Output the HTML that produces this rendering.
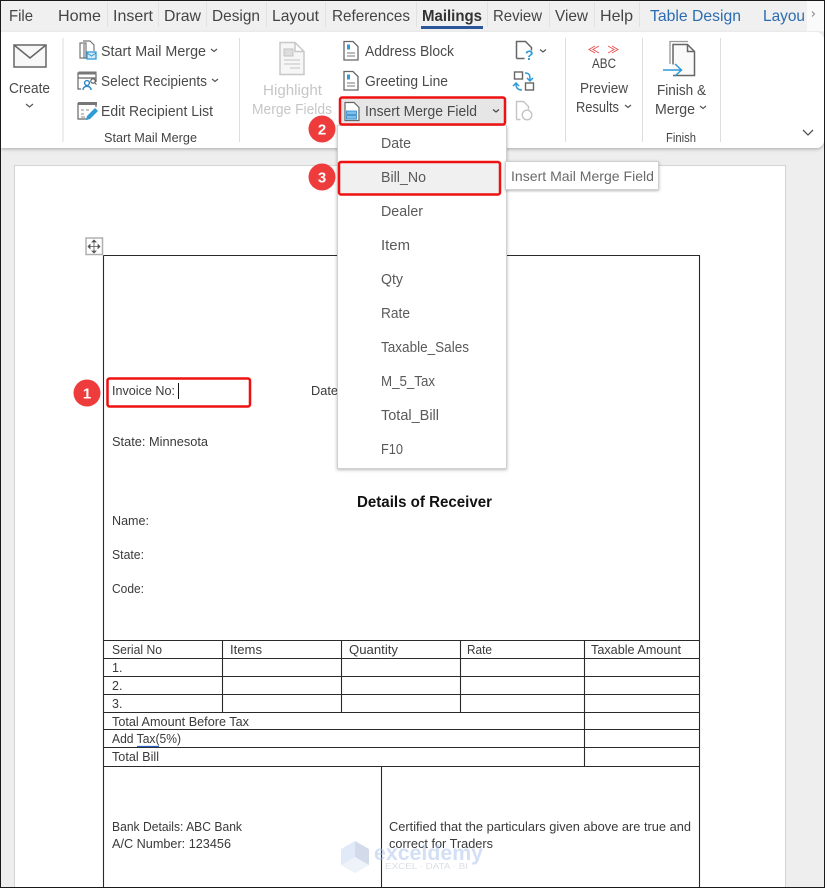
<!DOCTYPE html>
<html><head><meta charset="utf-8"><title>Mail Merge</title>
<style>
html,body{margin:0;padding:0;background:#fff;width:825px;height:888px;overflow:hidden}
svg{display:block}
text{font-family:"Liberation Sans",sans-serif;fill:#444}
.tab{font-size:16px;fill:#444}
.r{font-size:14.5px;fill:#4a4a4a}
.d{font-size:12.5px;fill:#3a3a3a}
.m{font-size:14.5px;fill:#5a5a5a}
</style></head><body>
<svg width="825" height="888" viewBox="0 0 825 888" xmlns="http://www.w3.org/2000/svg">
<defs>
<filter id="s" x="-10%" y="-10%" width="120%" height="120%"><feDropShadow dx="0" dy="1" stdDeviation="1.5" flood-color="#000" flood-opacity=".28"/></filter>
<filter id="b" x="-5%" y="-20%" width="110%" height="150%"><feDropShadow dx="0" dy="1.5" stdDeviation="1.5" flood-color="#000" flood-opacity=".25"/></filter>
</defs>
<rect width="825" height="888" fill="#eeeeee"/>
<rect x="0" y="0" width="825" height="32" fill="#f0f0f0"/>

<!-- page -->
<rect x="14.5" y="165.5" width="771" height="730" fill="#fff" stroke="#d4d4d4"/>

<!-- ribbon -->
<path d="M1 32H817a8 8 0 0 1 7 7V141a8 8 0 0 1-7 7H1Z" fill="#fff" filter="url(#b)"/>

<!-- tabs -->
<g stroke="#e2e2e2"><path d="M107.500 2V27M158.500 2V27M206.500 2V27M266.500 2V27M325.500 2V27M416.500 2V27M487.500 2V27M549.500 2V27M594.500 2V27M639.500 2V27"/></g>
<text class="tab" x="9" y="21" textLength="24" lengthAdjust="spacingAndGlyphs">File</text>
<text class="tab" x="58" y="21" textLength="43" lengthAdjust="spacingAndGlyphs">Home</text>
<text class="tab" x="113" y="21" textLength="40" lengthAdjust="spacingAndGlyphs">Insert</text>
<text class="tab" x="164" y="21" textLength="37" lengthAdjust="spacingAndGlyphs">Draw</text>
<text class="tab" x="212" y="21" textLength="48" lengthAdjust="spacingAndGlyphs">Design</text>
<text class="tab" x="272" y="21" textLength="47" lengthAdjust="spacingAndGlyphs">Layout</text>
<text class="tab" x="332" y="21" textLength="78" lengthAdjust="spacingAndGlyphs">References</text>
<text class="tab" x="422" y="21" textLength="60" lengthAdjust="spacingAndGlyphs" style="font-weight:bold;fill:#333">Mailings</text>
<rect x="421" y="26" width="62" height="3" fill="#2b579a"/>
<text class="tab" x="493" y="21" textLength="49" lengthAdjust="spacingAndGlyphs">Review</text>
<text class="tab" x="555" y="21" textLength="33" lengthAdjust="spacingAndGlyphs">View</text>
<text class="tab" x="600" y="21" textLength="33" lengthAdjust="spacingAndGlyphs">Help</text>
<text class="tab" x="650" y="21" textLength="91" lengthAdjust="spacingAndGlyphs" style="fill:#2b6cb0">Table Design</text>
<text class="tab" x="763" y="21" textLength="42" lengthAdjust="spacingAndGlyphs" style="fill:#2b6cb0">Layou</text>
<rect x="807" y="1" width="17" height="30" fill="#fafafa"/>
<path d="M812 11.500l2.500 2.500-2.500 2.500" fill="none" stroke="#888"/>

<!-- group separators -->
<g stroke="#dedede"><path d="M63 38V142M239.500 38V142M565.500 38V142M642.500 38V142M720.500 38V142"/></g>

<!-- Create -->
<g fill="none" stroke="#666" stroke-width="1.500"><rect x="14" y="45" width="32" height="22" fill="#f8f8f8"/><path d="M14 45L30 58L46 45"/></g>
<text class="r" x="9" y="93" textLength="41" lengthAdjust="spacingAndGlyphs">Create</text>
<path d="M26 104l3.500 3 3.500-3" fill="none" stroke="#555" stroke-width="1.200"/>

<!-- Start mail merge icons -->
<g fill="none" stroke="#777" stroke-width="1.200">
<path d="M80 43h6v15h-6zM83 41h7l4 4v6"/><path d="M84 44v14h3"/>
</g>
<rect x="87" y="52" width="9" height="7" fill="#d5ebf8" stroke="#2e9ad8" stroke-width="1.300"/><path d="M87 53l4.500 3 4.500-3" fill="none" stroke="#2e9ad8"/>
<text class="r" x="101" y="56" textLength="105" lengthAdjust="spacingAndGlyphs">Start Mail Merge</text>
<path d="M211 49l3 2.500 3-2.500" fill="none" stroke="#555" stroke-width="1.200"/>

<g fill="none" stroke="#666" stroke-width="1.200"><path d="M78 73h18v5h-18zM78 78v11h3M96 78v4"/></g>
<rect x="78.500" y="71.500" width="18" height="3" fill="#777"/>
<g fill="none" stroke="#2e88c8" stroke-width="1.400"><circle cx="87" cy="83" r="2.400"/><path d="M83 90c0-5 8-5 8 0"/></g>
<circle cx="93" cy="81" r="2.200" fill="none" stroke="#555" stroke-width="1.100"/><path d="M94.500 82.500l2 2" stroke="#555"/>
<text class="r" x="101" y="86" textLength="106" lengthAdjust="spacingAndGlyphs">Select Recipients</text>
<path d="M212 79l3 2.500 3-2.500" fill="none" stroke="#555" stroke-width="1.200"/>

<g fill="none" stroke="#666" stroke-width="1.200"><path d="M78 103h18v4M78 103v16h10"/></g>
<rect x="78" y="102" width="19" height="3" fill="#777"/>
<path d="M81 110h3M86 110h3M81 114h3M81 117h4" stroke="#888"/>
<path d="M86 120l1-4 8-8 3 3-8 8z" fill="#2e9ad8"/>
<text class="r" x="101" y="116" textLength="112" lengthAdjust="spacingAndGlyphs">Edit Recipient List</text>
<text x="104" y="142" font-size="12.500" textLength="93" lengthAdjust="spacingAndGlyphs">Start Mail Merge</text>

<!-- Highlight -->
<path d="M280 42.500h15l9 9v23h-24zM295 42.500v9h9" fill="#f6f6f6" stroke="#c8c8c8" stroke-width="1.500"/>
<rect x="284" y="49" width="9" height="7" fill="#ddd" stroke="#c4c4c4"/>
<path d="M284 60h16M284 64h16M290 68h10" stroke="#ccc" stroke-width="1.300"/>
<text x="263" y="95" font-size="14.500" style="fill:#c6c6c6" textLength="59" lengthAdjust="spacingAndGlyphs">Highlight</text>
<text x="252" y="114" font-size="14.500" style="fill:#c6c6c6" textLength="80" lengthAdjust="spacingAndGlyphs">Merge Fields</text>

<!-- Address block / Greeting -->
<g fill="#fff" stroke="#666" stroke-width="1.300"><path d="M344 41.500h9l5 5v13.500h-14z"/><path d="M344 71.500h9l5 5v13.500h-14z"/></g>
<g stroke="#777"><path d="M347 53h8M347 56h8M347 83h8M347 86h8"/></g>
<rect x="347" y="44.500" width="3" height="5" fill="#2e9ad8"/><rect x="347" y="74.500" width="3" height="5" fill="#2e9ad8"/>
<text class="r" x="365" y="56" textLength="89" lengthAdjust="spacingAndGlyphs">Address Block</text>
<text class="r" x="365" y="86" textLength="83" lengthAdjust="spacingAndGlyphs">Greeting Line</text>

<!-- right small icons -->
<path d="M516.500 58.500v-17h9l6 6v3M516.500 58.500h8" fill="none" stroke="#666" stroke-width="1.500"/>
<text x="525" y="60" font-size="14" font-weight="bold" style="fill:#2e9ad8">?</text>
<path d="M540 49.500l3 2.500 3-2.500" fill="none" stroke="#555" stroke-width="1.200"/>
<rect x="514.500" y="72" width="8" height="7" fill="none" stroke="#666" stroke-width="1.400"/>
<rect x="525.500" y="83" width="8" height="7" fill="none" stroke="#666" stroke-width="1.400"/>
<path d="M525 73c5 0 5 3 5 7M527 78l3 3 3-3M522 90c-5 0-6-3-6-6M513 86l3-3 3 3" fill="none" stroke="#2e9ad8" stroke-width="1.500"/>
<path d="M516.500 119.500v-18h7l5 5v3M516.500 119.500h4" fill="none" stroke="#c4c4c4" stroke-width="1.400"/>
<circle cx="527" cy="115" r="4.800" fill="none" stroke="#c4c4c4" stroke-width="1.400"/>

<!-- Preview -->
<path d="M595 46l-6 3.500 6 3.500M599 46l-6 3.500 6 3.500M608 46l6 3.500-6 3.500M612 46l6 3.500-6 3.500" fill="none" stroke="#ee5555" stroke-width="1"/>
<text x="592" y="68" font-size="13.500" textLength="24" lengthAdjust="spacingAndGlyphs">ABC</text>
<text class="r" x="580" y="93" textLength="48" lengthAdjust="spacingAndGlyphs">Preview</text>
<text class="r" x="576" y="112" textLength="43" lengthAdjust="spacingAndGlyphs">Results</text>
<path d="M625 105l3 2.500 3-2.500" fill="none" stroke="#555" stroke-width="1.200"/>

<!-- Finish -->
<path d="M670 64V41.500h18" fill="none" stroke="#999" stroke-width="1.300"/>
<path d="M673 75.500h21.500v-24l-7-7h-14.500v20" fill="#fafafa" stroke="#666" stroke-width="1.500"/>
<path d="M687.500 44.500v7h7" fill="none" stroke="#666" stroke-width="1.500"/>
<path d="M663 70h18M675 64l6.500 6-6.500 6" fill="none" stroke="#2e9ad8" stroke-width="1.500"/>
<text class="r" x="657" y="95" textLength="49" lengthAdjust="spacingAndGlyphs">Finish &amp;</text>
<text class="r" x="655" y="114" textLength="40" lengthAdjust="spacingAndGlyphs">Merge</text>
<path d="M700 106l3 2.500 3-2.500" fill="none" stroke="#555" stroke-width="1.200"/>
<text x="666" y="142" font-size="12.500" textLength="30" lengthAdjust="spacingAndGlyphs">Finish</text>
<path d="M803 130l5 5 5-5" fill="none" stroke="#555" stroke-width="1.300"/>

<!-- move handle -->
<rect x="86" y="238" width="16.500" height="16.500" fill="#fff" stroke="#b0b0b0" stroke-width="1.500"/>
<path d="M94 241v11M88.500 246.500h11M94 240l-2 2h4zM94 253l-2-2h4zM88 246.500l2-2v4zM100 246.500l-2-2v4z" fill="#555" stroke="#555" stroke-width=".8"/>

<!-- table -->
<g fill="none" stroke="#2a2a2a" stroke-width="1.100">
<path d="M103.500 255.500H699.500V888M103.500 255.500V888"/>
<path d="M103.500 640.500H699.500M103.500 658.500H699.500M103.500 676.500H699.500M103.500 694.500H699.500M103.500 712.500H699.500M103.500 729.500H699.500M103.500 747.500H699.500M103.500 766.500H699.500"/>
<path d="M222.500 640.500V712.500M341.500 640.500V712.500M460.500 640.500V712.500M584.500 640.500V766.500M381.500 766.500V888"/>
</g>

<!-- doc text -->
<text class="d" x="112" y="395" textLength="63" lengthAdjust="spacingAndGlyphs">Invoice No:</text>
<rect x="178" y="383" width="1" height="16" fill="#111"/>
<text class="d" x="311" y="395" textLength="27" lengthAdjust="spacingAndGlyphs">Date</text>
<text class="d" x="112" y="446" textLength="96" lengthAdjust="spacingAndGlyphs">State: Minnesota</text>
<text x="357" y="507" font-size="15.500" font-weight="bold" style="fill:#111" textLength="135" lengthAdjust="spacingAndGlyphs">Details of Receiver</text>
<text class="d" x="112" y="525" textLength="37" lengthAdjust="spacingAndGlyphs">Name:</text>
<text class="d" x="112" y="559" textLength="32" lengthAdjust="spacingAndGlyphs">State:</text>
<text class="d" x="112" y="593" textLength="32" lengthAdjust="spacingAndGlyphs">Code:</text>
<text class="d" x="112" y="654" textLength="50" lengthAdjust="spacingAndGlyphs">Serial No</text>
<text class="d" x="230" y="654" textLength="32" lengthAdjust="spacingAndGlyphs">Items</text>
<text class="d" x="349" y="654" textLength="49" lengthAdjust="spacingAndGlyphs">Quantity</text>
<text class="d" x="467" y="654" textLength="25" lengthAdjust="spacingAndGlyphs">Rate</text>
<text class="d" x="591" y="654" textLength="90" lengthAdjust="spacingAndGlyphs">Taxable Amount</text>
<text class="d" x="112" y="672">1.</text>
<text class="d" x="112" y="690">2.</text>
<text class="d" x="112" y="708">3.</text>
<text class="d" x="112" y="726" textLength="137" lengthAdjust="spacingAndGlyphs">Total Amount Before Tax</text>
<text class="d" x="112" y="743" textLength="69" lengthAdjust="spacingAndGlyphs">Add Tax(5%)</text>
<path d="M137 746.500H159" stroke="#2b5fc0" stroke-width="1.200"/>
<text class="d" x="112" y="761" textLength="47" lengthAdjust="spacingAndGlyphs">Total Bill</text>
<text class="d" x="112" y="831" textLength="130" lengthAdjust="spacingAndGlyphs">Bank Details: ABC Bank</text>
<text class="d" x="112" y="848" textLength="119" lengthAdjust="spacingAndGlyphs">A/C Number: 123456</text>
<text class="d" x="389" y="831" textLength="302" lengthAdjust="spacingAndGlyphs">Certified that the particulars given above are true and</text>
<text class="d" x="389" y="848" textLength="104" lengthAdjust="spacingAndGlyphs">correct for Traders</text>

<!-- watermark -->
<g opacity=".5">
<path d="M355 841l14 8v16l-14 8-14-8v-16z" fill="#c4d6f4"/>
<path d="M355 841l14 8v16l-14-8z" fill="#a9b9d8"/>
<path d="M341 865l14-8 14 8-14 8z" fill="#dde8f4"/>
<text x="374" y="860" font-size="21" font-weight="bold" style="fill:#a8c0ec" textLength="109" lengthAdjust="spacingAndGlyphs">exceldemy</text>
<text x="385" y="869" font-size="8.500" style="fill:#b4bcc8" textLength="83" lengthAdjust="spacingAndGlyphs">EXCEL · DATA · BI</text>
</g>

<!-- dropdown -->
<rect x="337.500" y="125.500" width="169" height="343" fill="#fff" stroke="#d0d0d0" filter="url(#s)"/>
<rect x="339" y="163" width="161" height="31" fill="#f0f0f0"/>
<text class="m" x="381" y="148" textLength="30" lengthAdjust="spacingAndGlyphs">Date</text>
<text class="m" x="381" y="182" textLength="45" lengthAdjust="spacingAndGlyphs">Bill_No</text>
<text class="m" x="381" y="216" textLength="42" lengthAdjust="spacingAndGlyphs">Dealer</text>
<text class="m" x="381" y="250" textLength="29" lengthAdjust="spacingAndGlyphs">Item</text>
<text class="m" x="381" y="284" textLength="22" lengthAdjust="spacingAndGlyphs">Qty</text>
<text class="m" x="381" y="318" textLength="29" lengthAdjust="spacingAndGlyphs">Rate</text>
<text class="m" x="381" y="352" textLength="88" lengthAdjust="spacingAndGlyphs">Taxable_Sales</text>
<text class="m" x="381" y="386" textLength="54" lengthAdjust="spacingAndGlyphs">M_5_Tax</text>
<text class="m" x="381" y="420" textLength="58" lengthAdjust="spacingAndGlyphs">Total_Bill</text>
<text class="m" x="381" y="454" textLength="22" lengthAdjust="spacingAndGlyphs">F10</text>

<!-- Insert merge field button -->
<rect x="340" y="97.500" width="165" height="27" rx="2" fill="#e6e6e6" stroke="#ee1111" stroke-width="2.500"/>
<path d="M345 102.500h9l5 5v13h-14z" fill="#fff" stroke="#666" stroke-width="1.200"/>
<rect x="346.500" y="111" width="10" height="3.500" fill="#7cc0ec" stroke="#2e88c8" stroke-width=".8"/>
<rect x="346.500" y="115.500" width="10" height="3.500" fill="#7cc0ec" stroke="#2e88c8" stroke-width=".8"/>
<text class="r" x="365" y="116" textLength="112" lengthAdjust="spacingAndGlyphs">Insert Merge Field</text>
<path d="M493 109.500l3 2.500 3-2.500" fill="none" stroke="#444" stroke-width="1.200"/>

<!-- red boxes -->
<rect x="339" y="162" width="161" height="32.500" rx="2" fill="none" stroke="#ee1111" stroke-width="2.500"/>
<rect x="107.500" y="378.500" width="142.500" height="28" rx="2" fill="none" stroke="#ee1111" stroke-width="2.500"/>

<!-- tooltip -->
<rect x="505.500" y="161.500" width="153" height="28" fill="#fff" stroke="#d0d0d0" filter="url(#s)"/>
<text x="511" y="181" font-size="14" style="fill:#6a6a6a" textLength="143" lengthAdjust="spacingAndGlyphs">Insert Mail Merge Field</text>

<!-- circles -->
<circle cx="87" cy="393" r="13.500" fill="#ee3b3b"/>
<circle cx="322" cy="129" r="13.500" fill="#ee3b3b"/>
<circle cx="322" cy="177" r="13.500" fill="#ee3b3b"/>
<g font-size="15" font-weight="bold" text-anchor="middle">
<text x="87" y="398.500" style="fill:#fff">1</text>
<text x="322" y="134.500" style="fill:#fff">2</text>
<text x="322" y="182.500" style="fill:#fff">3</text>
</g>

<!-- frame -->
<rect x=".5" y=".5" width="824" height="887" fill="none" stroke="#1a1a1a"/>
</svg>
</body></html>
